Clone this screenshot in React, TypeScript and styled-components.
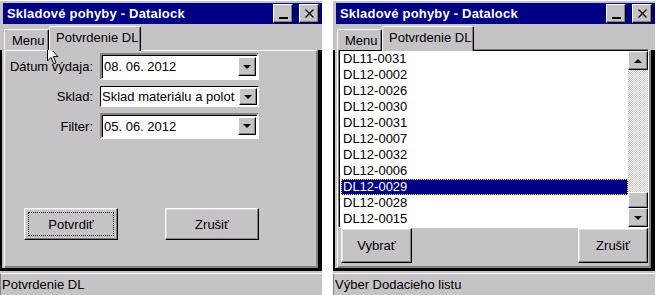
import React from 'react';
import styled, { createGlobalStyle } from 'styled-components';

const GRAY = '#c6c3c6';
const DARK = '#848284';
const NAVY = '#000084';

const GlobalStyle = createGlobalStyle`
  html, body {
    margin: 0;
    padding: 0;
    background: #fff;
  }
  body {
    font-family: 'Liberation Sans', Arial, sans-serif;
    font-size: 13px;
    color: #000;
  }
`;

const Screen = styled.div`
  position: relative;
  display: flex;
  gap: 11px;
  width: 661px;
  height: 295px;
  overflow: hidden;
`;

const Window = styled.div`
  width: 322px;
  height: 295px;
  display: flex;
  flex-direction: column;
  background: ${GRAY};
  border-top: 1px solid #fff;
  box-sizing: border-box;
`;

const TitleBar = styled.div`
  height: 21px;
  margin: 2px 0 0 3px;
  padding: 0 3px 0 4px;
  background: ${NAVY};
  color: #fff;
  font-weight: bold;
  font-size: 13px;
  letter-spacing: 0.2px;
  display: flex;
  align-items: center;
  justify-content: space-between;
`;

const CaptionButtons = styled.div`
  display: flex;
  gap: 6px;
`;

const CaptionButton = styled.span<{ $center?: boolean }>`
  width: 20px;
  height: 19px;
  box-sizing: border-box;
  background: ${GRAY};
  border: 1px solid;
  border-color: #fff #000 #000 #fff;
  box-shadow: inset -1px -1px 0 ${DARK};
  display: flex;
  align-items: ${(p) => (p.$center ? 'center' : 'flex-end')};
  justify-content: center;
`;

const MinBar = styled.span`
  width: 9px;
  height: 2px;
  margin-bottom: 3px;
  background: #000;
`;

const TabRow = styled.div`
  height: 26px;
  padding-left: 4px;
  display: flex;
  align-items: flex-end;
`;

const Tab = styled.div<{ $active?: boolean }>`
  position: relative;
  z-index: ${(p) => (p.$active ? 2 : 1)};
  box-sizing: border-box;
  height: ${(p) => (p.$active ? 25 : 21)}px;
  margin-bottom: ${(p) => (p.$active ? -1 : 0)}px;
  padding: ${(p) => (p.$active ? '0 0 3px 6px' : '0 0 0 7px')};
  width: ${(p) => (p.$active ? 92 : 45)}px;
  background: ${GRAY};
  border: 1px solid;
  border-bottom: none;
  border-color: #fff #000 transparent #fff;
  border-radius: 2px 2px 0 0;
  box-shadow: inset -1px 0 0 ${DARK};
  display: flex;
  align-items: center;
  white-space: nowrap;
`;

const Body = styled.div`
  flex: 1;
  display: flex;
  padding-left: 2px;
  border-left: 2px solid #000;
  border-right: 4px solid #000;
  border-bottom: 3px solid #000;
`;

const Panel = styled.div`
  flex: 1;
  display: flex;
  flex-direction: column;
  border-top: 1px solid #fff;
  border-left: 1px solid #fff;
  border-right: 2px solid ${DARK};
  border-bottom: 2px solid ${DARK};
`;

const StatusBar = styled.div`
  margin-top: 2px;
  height: 22px;
  box-sizing: border-box;
  padding-left: 1px;
  border-top: 1px solid #fff;
  border-left: 1px solid ${DARK};
  line-height: 21px;
  white-space: nowrap;
`;

/* ---- left window form ---- */

const Form = styled.div`
  display: grid;
  grid-template-columns: 88px 159px;
  grid-template-rows: 27px 21px 26px;
  column-gap: 7px;
  row-gap: 6px;
  padding-top: 2px;
  align-items: center;
`;

const Label = styled.span`
  text-align: right;
  white-space: nowrap;
`;

const Field = styled.div<{ $combo?: boolean }>`
  height: 100%;
  box-sizing: border-box;
  display: flex;
  align-items: stretch;
  background: #fff;
  overflow: hidden;
  white-space: nowrap;
  border: ${(p) => (p.$combo ? 1 : 2)}px solid;
  border-color: ${(p) => (p.$combo ? '#000 #fff #fff #000' : `${DARK} #fff #fff ${DARK}`)};
  box-shadow: ${(p) => (p.$combo ? 'none' : 'inset 1px 1px 0 #000')};
  padding: ${(p) => (p.$combo ? '0 0 0 1px' : '1px 0 1px 2px')};
`;

const FieldText = styled.span`
  flex: 1;
  overflow: hidden;
  display: flex;
  align-items: center;
`;

const DropButton = styled.span`
  flex: none;
  width: 18px;
  margin: 1px 1px 1px 0;
  box-sizing: border-box;
  background: ${GRAY};
  border: 1px solid;
  border-color: #fff #000 #000 #fff;
  box-shadow: inset -1px -1px 0 ${DARK};
  display: flex;
  align-items: center;
  justify-content: center;
`;

const Arrow = styled.span<{ $up?: boolean }>`
  width: 0;
  height: 0;
  border-left: 4px solid transparent;
  border-right: 4px solid transparent;
  ${(p) => (p.$up ? 'border-bottom: 4px solid #000;' : 'border-top: 4px solid #000;')}
`;

const ButtonRow = styled.div<{ $spread?: boolean }>`
  display: flex;
  gap: 47px;
  justify-content: ${(p) => (p.$spread ? 'space-between' : 'flex-start')};
  padding: ${(p) => (p.$spread ? '0 1px 0 3px' : '0 0 0 19px')};
  margin-top: ${(p) => (p.$spread ? 0 : 69)}px;
`;

const PushButton = styled.div<{ $w: number; $h: number; $focused?: boolean }>`
  position: relative;
  width: ${(p) => p.$w}px;
  height: ${(p) => p.$h}px;
  box-sizing: border-box;
  background: ${GRAY};
  border: 1px solid;
  border-color: #fff #000 #000 #fff;
  box-shadow: inset -1px -1px 0 ${DARK}, inset 1px 1px 0 #dedbde;
  display: flex;
  align-items: center;
  justify-content: center;

  ${(p) =>
    p.$focused &&
    `
    &::after {
      content: '';
      position: absolute;
      inset: 3px;
      border: 1px dotted #000;
    }
  `}
`;

/* ---- right window list ---- */

const ListBox = styled.div`
  margin-top: -2px;
  height: 179px;
  box-sizing: border-box;
  border: 1px solid;
  border-color: ${DARK} #fff #fff ${DARK};
  background: #fff;
  display: flex;
`;

const ListInner = styled.div`
  flex: 1;
  display: flex;
  border-top: 1px solid #000;
  border-left: 1px solid #000;
`;

const Items = styled.div`
  flex: 1;
  padding-left: 1px;
`;

const Item = styled.div<{ $selected?: boolean }>`
  height: 16px;
  box-sizing: border-box;
  line-height: 14px;
  padding-left: 1px;
  border: 1px solid transparent;
  ${(p) =>
    p.$selected &&
    `
    background: ${NAVY};
    color: #fff;
    border: 1px dotted #ffef00;
  `}
`;

const ScrollBar = styled.div`
  width: 20px;
  display: flex;
  flex-direction: column;
`;

const ScrollButton = styled.span<{ $h: number }>`
  height: ${(p) => p.$h}px;
  box-sizing: border-box;
  background: ${GRAY};
  border: 1px solid;
  border-color: #fff #000 #000 #fff;
  box-shadow: inset -1px -1px 0 ${DARK};
  display: flex;
  align-items: center;
  justify-content: center;
`;

const Track = styled.div`
  flex: 1;
  background: repeating-conic-gradient(${GRAY} 0 25%, #fff 0 50%) 0 0 / 2px 2px;
`;

const Cursor = styled.svg`
  position: absolute;
  left: 47px;
  top: 45px;
`;

const items = [
  'DL11-0031',
  'DL12-0002',
  'DL12-0026',
  'DL12-0030',
  'DL12-0031',
  'DL12-0007',
  'DL12-0032',
  'DL12-0006',
  'DL12-0029',
  'DL12-0028',
  'DL12-0015',
];

const Caption: React.FC = () => (
  <TitleBar>
    <span>Skladové pohyby - Datalock</span>
    <CaptionButtons>
      <CaptionButton>
        <MinBar />
      </CaptionButton>
      <CaptionButton $center>
        <svg width="9" height="9" viewBox="0 0 9 9">
          <path d="M0.5 0.5 L8.5 8.5 M8.5 0.5 L0.5 8.5" stroke="#000" strokeWidth="1.2" />
        </svg>
      </CaptionButton>
    </CaptionButtons>
  </TitleBar>
);

const Tabs: React.FC = () => (
  <TabRow>
    <Tab>Menu</Tab>
    <Tab $active>Potvrdenie DL</Tab>
  </TabRow>
);

export default function App() {
  return (
    <Screen>
      <GlobalStyle />

      {/* Form to confirm delivery note */}
      <Window>
        <Caption />
        <Tabs />
        <Body>
          <Panel>
            <Form>
              <Label>Dátum výdaja:</Label>
              <Field>
                <FieldText>08. 06. 2012</FieldText>
                <DropButton>
                  <Arrow />
                </DropButton>
              </Field>
              <Label>Sklad:</Label>
              <Field $combo>
                <FieldText>Sklad materiálu a polot</FieldText>
                <DropButton>
                  <Arrow />
                </DropButton>
              </Field>
              <Label>Filter:</Label>
              <Field>
                <FieldText>05. 06. 2012</FieldText>
                <DropButton>
                  <Arrow />
                </DropButton>
              </Field>
            </Form>
            <ButtonRow>
              <PushButton $w={94} $h={32} $focused>
                Potvrdiť
              </PushButton>
              <PushButton $w={94} $h={32}>
                Zrušiť
              </PushButton>
            </ButtonRow>
          </Panel>
        </Body>
        <StatusBar>Potvrdenie DL</StatusBar>
      </Window>

      {/* Delivery note picker */}
      <Window>
        <Caption />
        <Tabs />
        <Body>
          <Panel>
            <ListBox>
              <ListInner>
                <Items>
                  {items.map((it, i) => (
                    <Item key={it} $selected={i === 8}>
                      {it}
                    </Item>
                  ))}
                </Items>
                <ScrollBar>
                  <ScrollButton $h={19}>
                    <Arrow $up />
                  </ScrollButton>
                  <Track />
                  <ScrollButton $h={16} />
                  <ScrollButton $h={19}>
                    <Arrow />
                  </ScrollButton>
                </ScrollBar>
              </ListInner>
            </ListBox>
            <ButtonRow $spread>
              <PushButton $w={71} $h={35}>
                Vybrať
              </PushButton>
              <PushButton $w={70} $h={35}>
                Zrušiť
              </PushButton>
            </ButtonRow>
          </Panel>
        </Body>
        <StatusBar>Výber Dodacieho listu</StatusBar>
      </Window>

      <Cursor width="13" height="20" viewBox="0 0 13 20">
        <path
          d="M0.5 0.5 L0.5 16 L4 12.5 L6.8 18.8 L9 17.8 L6.3 11.6 L11 11.6 Z"
          fill="#fff"
          stroke="#000"
          strokeWidth="1"
        />
      </Cursor>
    </Screen>
  );
}
